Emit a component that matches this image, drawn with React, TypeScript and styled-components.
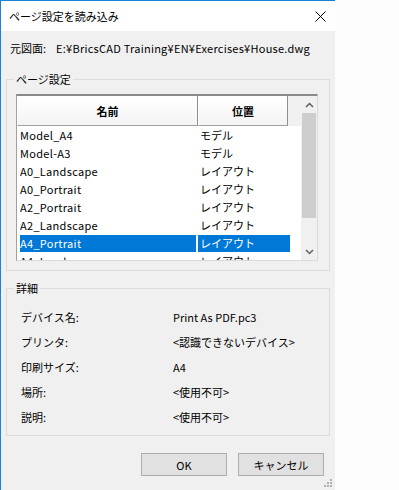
import React from "react";
import styled, { createGlobalStyle } from "styled-components";

const Global = createGlobalStyle`
  html, body { margin: 0; padding: 0; background: #fdfdfd; }
  body {
    font-family: "Noto Sans CJK JP", "Noto Sans", sans-serif;
    font-size: 11px;
    color: #000;
  }
  * { box-sizing: border-box; }
`;

const Window = styled.div`
  position: relative;
  width: 335px;
  height: 490px;
  border-left: 1px solid #1883d7;
  border-top: 1px solid #1883d7;
  display: flex;
  flex-direction: column;
  background: #f0f0f0;
`;

const TitleBar = styled.div`
  height: 30px;
  flex: none;
  background: #fff;
  display: flex;
  align-items: center;
  justify-content: space-between;
  padding: 0 9px 0 8px;
  line-height: 16px;
`;

const Content = styled.div`
  flex: 1;
  padding: 9px 5px 0 5px;
  display: flex;
  flex-direction: column;
`;

const SourceRow = styled.div`
  display: flex;
  gap: 10px;
  line-height: 16px;
  padding-left: 4px;
  height: 16px;
`;

const Latin = styled.span`
  letter-spacing: 0.25px;
`;

const Group = styled.fieldset<{ $mt: number; $pt: number; $pb: number }>`
  margin: ${(p) => p.$mt}px 0 0 0;
  padding: ${(p) => p.$pt}px 11px ${(p) => p.$pb}px 9px;
  border: 1px solid #dcdcdc;
  min-width: 0;
`;

const Legend = styled.legend`
  padding: 0 2px;
  margin-left: -2px;
  line-height: 16px;
  font-size: 11px;
`;

const ListBox = styled.div`
  height: 167px;
  display: flex;
  border-top: 2px solid #8a8a8a;
  border-left: 1px solid #a0a0a0;
  border-right: 1px solid #dadada;
  border-bottom: 1px solid #dadada;
  background: #fff;
`;

const TableArea = styled.div`
  flex: 1;
  overflow: hidden;
  display: flex;
  flex-direction: column;
`;

const HeaderRow = styled.div`
  display: grid;
  grid-template-columns: 181px 90px 1fr;
  height: 30px;
  flex: none;
  background: #f0f0f0;
`;

const HeaderCell = styled.div`
  display: flex;
  align-items: center;
  justify-content: center;
  font-weight: bold;
  background: linear-gradient(#ffffff, #f4f4f4);
  border-left: 1px solid #fff;
  border-right: 1px solid #8e8e8e;
  border-bottom: 1px solid #a0a0a0;
`;

const Filler = styled.div`
  background: #f0f0f0;
`;

const Rows = styled.div`
  padding-left: 3px;
`;

const Row = styled.div`
  display: grid;
  grid-template-columns: 178px 92px;
  height: 18px;
  align-items: center;
`;

const Cell = styled.div<{ $sel?: boolean; $col: number }>`
  height: 17px;
  line-height: 17px;
  white-space: nowrap;
  overflow: hidden;
  margin-right: ${(p) => (p.$col === 0 ? 2 : 0)}px;
  padding-left: ${(p) => (p.$col === 0 ? 0 : 2)}px;
  letter-spacing: ${(p) => (p.$col === 0 ? 0.3 : 0)}px;
  background: ${(p) => (p.$sel ? "#0078d7" : "transparent")};
  color: ${(p) => (p.$sel ? "#fff" : "#000")};
`;

const ScrollBar = styled.div`
  width: 16px;
  flex: none;
  background: #f0f0f0;
  display: flex;
  flex-direction: column;
`;

const ScrollArrow = styled.div`
  height: 17px;
  display: flex;
  align-items: center;
  justify-content: center;
`;

const ScrollTrack = styled.div`
  flex: 1;
  padding: 0 1px;
  display: flex;
  flex-direction: column;
`;

const Thumb = styled.div`
  height: 105px;
  background: #cdcdcd;
`;

const DetailRow = styled.div`
  display: grid;
  grid-template-columns: 152px 1fr;
  height: 25px;
  align-items: center;
  padding-left: 5px;
  line-height: 16px;
`;

const ButtonBar = styled.div`
  display: flex;
  justify-content: flex-end;
  gap: 11px;
  margin-top: 17px;
  padding-right: 6px;
`;

const Button = styled.button`
  width: 86px;
  height: 23px;
  background: #e1e1e1;
  border: 1px solid #adadad;
  font-family: inherit;
  font-size: 11px;
  color: #000;
  padding: 0;
`;

const Grip = styled.svg`
  position: absolute;
  right: 2px;
  bottom: 2px;
`;

const rows: [string, string][] = [
  ["Model_A4", "モデル"],
  ["Model-A3", "モデル"],
  ["A0_Landscape", "レイアウト"],
  ["A0_Portrait", "レイアウト"],
  ["A2_Portrait", "レイアウト"],
  ["A2_Landscape", "レイアウト"],
  ["A4_Portrait", "レイアウト"],
  ["A4_Landscape", "レイアウト"],
];

const details: [string, string][] = [
  ["デバイス名:", "Print As PDF.pc3"],
  ["プリンタ:", "<認識できないデバイス>"],
  ["印刷サイズ:", "A4"],
  ["場所:", "<使用不可>"],
  ["説明:", "<使用不可>"],
];

export default function App() {
  return (
    <>
      <Global />
      <Window>
        <TitleBar>
          <span>ページ設定を読み込み</span>
          <svg width="11" height="11" viewBox="0 0 11 11">
            <path d="M0.5 0.5 L10.5 10.5 M10.5 0.5 L0.5 10.5" stroke="#000" strokeWidth="1" />
          </svg>
        </TitleBar>
        <Content>
          <SourceRow>
            <span>元図面:</span>
            <Latin>E:¥BricsCAD Training¥EN¥Exercises¥House.dwg</Latin>
          </SourceRow>
          <Group $mt={15} $pt={7} $pb={9}>
            <Legend>ページ設定</Legend>
            <ListBox>
              <TableArea>
                <HeaderRow>
                  <HeaderCell>名前</HeaderCell>
                  <HeaderCell>位置</HeaderCell>
                  <Filler />
                </HeaderRow>
                <Rows>
                  {rows.map(([n, l], i) => (
                    <Row key={n}>
                      <Cell $col={0} $sel={i === 6}>{n}</Cell>
                      <Cell $col={1} $sel={i === 6}>{l}</Cell>
                    </Row>
                  ))}
                </Rows>
              </TableArea>
              <ScrollBar>
                <ScrollArrow>
                  <svg width="9" height="6" viewBox="0 0 9 6">
                    <path d="M1 5 L4.5 1.5 L8 5" fill="none" stroke="#606060" strokeWidth="1.5" />
                  </svg>
                </ScrollArrow>
                <ScrollTrack>
                  <Thumb />
                </ScrollTrack>
                <ScrollArrow>
                  <svg width="9" height="6" viewBox="0 0 9 6">
                    <path d="M1 1 L4.5 4.5 L8 1" fill="none" stroke="#606060" strokeWidth="1.5" />
                  </svg>
                </ScrollArrow>
              </ScrollBar>
            </ListBox>
          </Group>
          <Group $mt={9} $pt={8} $pb={6}>
            <Legend>詳細</Legend>
            {details.map(([k, v]) => (
              <DetailRow key={k}>
                <span>{k}</span>
                <span>{v}</span>
              </DetailRow>
            ))}
          </Group>
          <ButtonBar>
            <Button>OK</Button>
            <Button>キャンセル</Button>
          </ButtonBar>
        </Content>
        <Grip width="10" height="10" viewBox="0 0 10 10">
          {[
            [7, 1],
            [4, 4], [7, 4],
            [1, 7], [4, 7], [7, 7],
          ].map(([x, y]) => (
            <rect key={`${x}-${y}`} x={x} y={y} width="2" height="2" fill="#b0b0b0" />
          ))}
        </Grip>
      </Window>
    </>
  );
}
